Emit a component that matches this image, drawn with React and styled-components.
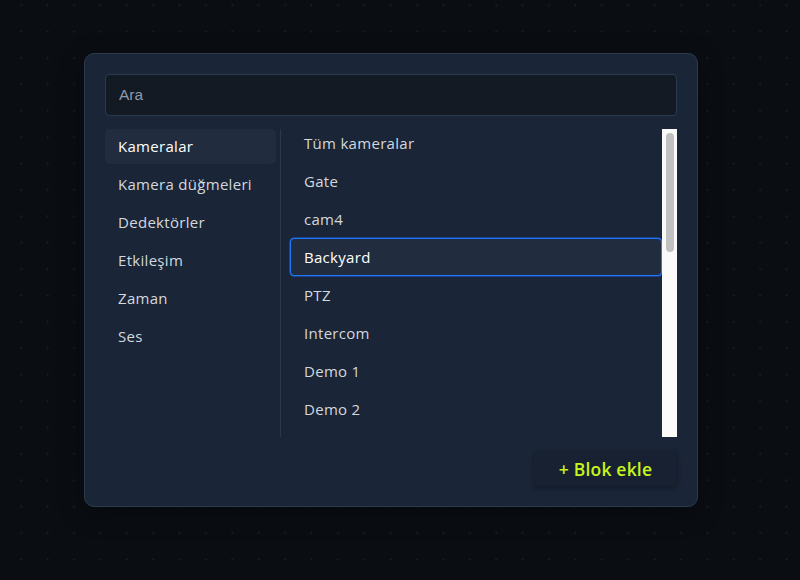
import React from "react";
import styled, { createGlobalStyle } from "styled-components";

const Global = createGlobalStyle`
  html, body { margin: 0; padding: 0; }
  body {
    width: 800px;
    height: 580px;
    overflow: hidden;
    background-color: #0a0d12;
    background-image: radial-gradient(circle, #171c24 0.9px, transparent 1.4px);
    background-size: 26.4px 26.4px;
    background-position: 8px -8px;
    font-family: "Open Sans", "Noto Sans", sans-serif;
  }
`;

const Page = styled.div`
  height: 580px;
  display: flex;
  align-items: flex-start;
  padding: 53px 0 0 84px;
  box-sizing: border-box;
`;

const Card = styled.div`
  width: 614px;
  height: 454px;
  box-sizing: border-box;
  background: #1a2537;
  border: 1px solid #2b3a4e;
  border-radius: 10px;
  padding: 20px 20px 19px 20px;
  display: flex;
  flex-direction: column;
  box-shadow: 0 6px 24px rgba(0, 0, 0, 0.35);
`;

const Search = styled.input`
  height: 42px;
  box-sizing: border-box;
  background: #131a24;
  border: 1px solid #2a3a4f;
  border-radius: 4px;
  padding: 0 13px;
  color: #d5dae1;
  font-family: "Liberation Sans", Arial, sans-serif;
  font-size: 15.5px;
  outline: none;
  &::placeholder { color: #8d99aa; }
`;

const Body = styled.div`
  display: flex;
  margin-top: 13px;
  height: 308px;
`;

const Sidebar = styled.div`
  width: 171px;
  display: flex;
  flex-direction: column;
  margin-right: 4px;
`;

const SideItem = styled.div`
  height: 35px;
  margin-bottom: 3px;
  box-sizing: border-box;
  padding: 0 0 1px 13px;
  display: flex;
  align-items: center;
  border-radius: 5px;
  font-size: 15px;
  letter-spacing: 0.3px;
  color: ${(p) => (p.$active ? "#ffffff" : "#d3d8df")};
  background: ${(p) => (p.$active ? "#212d3e" : "transparent")};
`;

const Divider = styled.div`
  width: 1px;
  background: #2a394c;
`;

const ListPane = styled.div`
  flex: 1;
  overflow: hidden;
  padding-left: 9px;
`;

const List = styled.div`
  display: flex;
  flex-direction: column;
  margin-top: -5px;
`;

const ListItem = styled.div`
  height: 38px;
  flex: none;
  box-sizing: border-box;
  display: flex;
  align-items: center;
  padding: 0 0 1px 13px;
  border-radius: 4px;
  font-size: 15px;
  letter-spacing: 0.3px;
  color: ${(p) => (p.$selected ? "#ffffff" : "#d3d8df")};
  background: ${(p) => (p.$selected ? "#212d3e" : "transparent")};
  border: 1px solid ${(p) => (p.$selected ? "#2176ff" : "transparent")};
  box-shadow: ${(p) => (p.$selected ? "0 0 0 0.5px #1a63d8" : "none")};
`;

const ScrollTrack = styled.div`
  width: 15px;
  flex: none;
  background: #fafafa;
  box-sizing: border-box;
  padding: 4px 3px 0 4px;
`;

const ScrollThumb = styled.div`
  height: 119px;
  background: #c1c1c1;
  border-radius: 4px;
`;

const Footer = styled.div`
  display: flex;
  justify-content: flex-end;
  margin-top: 14px;
`;

const AddButton = styled.button`
  width: 143px;
  height: 35px;
  border: none;
  border-radius: 4px;
  background: #172131;
  box-shadow: 0 2px 5px rgba(0, 0, 0, 0.35);
  color: #c8f51c;
  font-family: "Open Sans", "Noto Sans", sans-serif;
  font-size: 17.5px;
  font-weight: 600;
  letter-spacing: 0.2px;
  cursor: pointer;
`;

const sideItems = ["Kameralar", "Kamera düğmeleri", "Dedektörler", "Etkileşim", "Zaman", "Ses"];
const cams = ["Tüm kameralar", "Gate", "cam4", "Backyard", "PTZ", "Intercom", "Demo 1", "Demo 2"];

export default function App() {
  return (
    <>
      <Global />
      <Page>
        <Card>
          <Search placeholder="Ara" />
          <Body>
            <Sidebar>
              {sideItems.map((s, i) => (
                <SideItem key={s} $active={i === 0}>{s}</SideItem>
              ))}
            </Sidebar>
            <Divider />
            <ListPane>
              <List>
                {cams.map((c) => (
                  <ListItem key={c} $selected={c === "Backyard"}>{c}</ListItem>
                ))}
              </List>
            </ListPane>
            <ScrollTrack>
              <ScrollThumb />
            </ScrollTrack>
          </Body>
          <Footer>
            <AddButton>+ Blok ekle</AddButton>
          </Footer>
        </Card>
      </Page>
    </>
  );
}
